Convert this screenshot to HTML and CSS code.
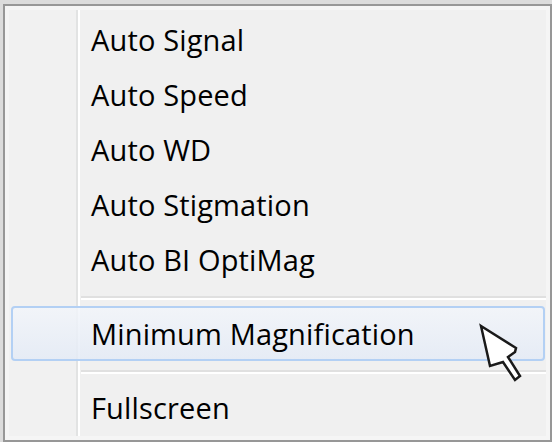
FILE: index.html
```html
<!DOCTYPE html>
<html>
<head>
<meta charset="utf-8">
<link rel="stylesheet" href="styles.css">
</head>
<body>
<div class="menu">
  <div class="list">
    <div class="item">Auto Signal</div>
    <div class="item">Auto Speed</div>
    <div class="item">Auto WD</div>
    <div class="item">Auto Stigmation</div>
    <div class="item">Auto BI OptiMag</div>
    <div class="sep"></div>
    <div class="item hover">Minimum Magnification</div>
    <div class="sep"></div>
    <div class="item">Fullscreen</div>
  </div>
</div>
<svg class="cursor" width="46" height="62" viewBox="0 0 46 62">
  <polygon points="3,4 38,26 37,30 30,35 42,54 37,58 25,40 12,44" fill="#fff" stroke="#1a1a1a" stroke-width="2.5" stroke-linejoin="miter"/>
</svg>
</body>
</html>
```
FILE: styles.css
```css
html, body {
  margin: 0;
  padding: 0;
}
body {
  width: 552px;
  height: 442px;
  background: #dcdcdc;
  position: relative;
  overflow: hidden;
  font-family: "Open Sans", "Noto Sans", sans-serif;
}
.menu {
  margin: 4px 0 0 3px;
  border: 2px solid #979797;
  background: #f5f5f5;
  padding: 4px;
  box-sizing: border-box;
  width: 549px;
  height: 438px;
}
.list {
  height: 100%;
  box-sizing: border-box;
  padding-top: 2px;
  background:
    linear-gradient(to right, transparent 67px, #e2e3e3 67px, #e2e3e3 69px, #ffffff 69px, #ffffff 71px, transparent 71px),
    linear-gradient(to right, #f1f1f1 67px, #f0f0f0 67px);
  display: flex;
  flex-direction: column;
}
.item {
  height: 55px;
  flex: none;
  box-sizing: border-box;
  margin: 0 1px 0 2px;
  padding-left: 78px;
  display: flex;
  align-items: center;
  font-size: 29px;
  letter-spacing: 0.15px;
  color: #000;
  border: 2px solid transparent;
  border-radius: 4px;
}
.hover {
  border-color: #b3d0f4;
  background: linear-gradient(to bottom, rgba(242,245,250,0.85), rgba(228,235,246,0.85));
}
.sep {
  flex: none;
  height: 2px;
  margin: 9px 0 6px 72px;
  background: #e0e0e0;
  border-bottom: 2px solid #ffffff;
}
.cursor {
  position: absolute;
  left: 478px;
  top: 322px;
}
```
